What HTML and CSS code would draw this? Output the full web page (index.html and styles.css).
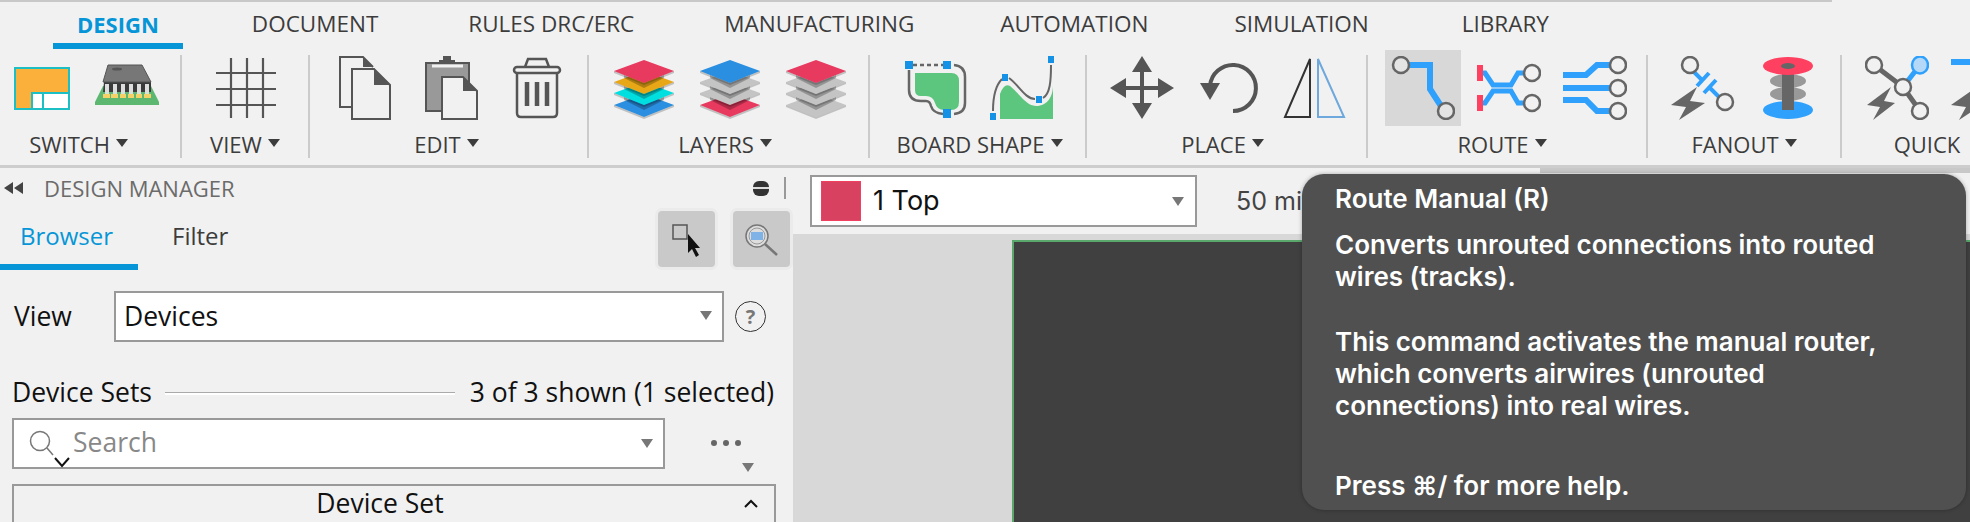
FILE: index.html
```html
<!DOCTYPE html>
<html lang="en">
<head>
    <meta charset="UTF-8">
    <meta name="viewport" content="width=device-width, initial-scale=1.0">
    <title>Design Manager</title>
    <link rel="stylesheet" href="styles.css">
</head>
<body>
    <div class="top-strip"></div>

    <div class="ribbon">
        <div class="tabs">
            <span class="tab active">DESIGN</span>
            <span class="tab">DOCUMENT</span>
            <span class="tab">RULES DRC/ERC</span>
            <span class="tab">MANUFACTURING</span>
            <span class="tab tab-auto">AUTOMATION</span>
            <span class="tab tab-sim">SIMULATION</span>
            <span class="tab tab-lib">LIBRARY</span>
        </div>

        <div class="groups">
            <div class="group g-switch">
                <div class="icons">
                    <svg viewBox="0 0 64 64">
                        <rect x="6" y="12" width="54" height="41" fill="#fbb03b" stroke="#1bbfc4" stroke-width="2"/>
                        <rect x="23" y="37" width="37" height="16" fill="#fff" stroke="#1bbfc4" stroke-width="2"/>
                        <path d="M34 37V53" stroke="#1bbfc4" stroke-width="2"/>
                    </svg>
                    <svg viewBox="0 0 64 64">
                        <polygon points="8,30 56,30 64,46 64,49 0,49 0,46" fill="#5cb870"/>
                        <polygon points="9,26 56,26 56,36 8,36" fill="#3a3a3a"/>
                        <polygon points="13,9 47,9 56,26 8,26" fill="#777" stroke="#555"/>
                        <path d="M12 28V38M20 28V38M28 28V38M36 28V38M44 28V38M52 28V38" stroke="#ddd" stroke-width="4"/>
                        <path d="M8 40H15M16 40H23M25 40H31M33 40H39M41 40H47M49 40H56" stroke="#f5d268" stroke-width="4"/>
                        <ellipse cx="22" cy="13" rx="5" ry="1.5" fill="#555"/>
                    </svg>
                </div>
                <div class="label">SWITCH<i class="caret"></i></div>
            </div>

            <div class="group g-view">
                <div class="icons">
                    <svg viewBox="0 0 64 64">
                        <path d="M17 2V62M33 2V62M49 2V62M2 17H62M2 33H62M2 49H62" stroke="#555" stroke-width="2.2" fill="none"/>
                    </svg>
                </div>
                <div class="label">VIEW<i class="caret"></i></div>
            </div>

            <div class="group g-edit">
                <div class="icons">
                    <svg viewBox="0 0 64 64">
                        <path d="M19 51H7V1H30L40 11" fill="none" stroke="#555" stroke-width="2"/>
                        <path d="M19 13H41L57 29V63H19Z" fill="#f1f1f1" stroke="#555" stroke-width="2"/>
                        <path d="M41 13L57 29H41Z" fill="#555"/>
                        <path d="M30 1L40 11H30Z" fill="#555"/>
                    </svg>
                    <svg viewBox="0 0 64 64">
                        <rect x="7" y="7" width="43" height="48" fill="#999" stroke="#555" stroke-width="2"/>
                        <path d="M13 10H44" stroke="#f1f1f1" stroke-width="3"/>
                        <path d="M20 7V4H24V0H32V4H36V7Z" fill="#555"/>
                        <path d="M23 21H44L58 35V63H23Z" fill="#f1f1f1" stroke="#555" stroke-width="2"/>
                        <path d="M44 21L58 35H44Z" fill="#555"/>
                    </svg>
                    <svg viewBox="0 0 64 64">
                        <path d="M12 17V57Q12 61 16 61H48Q52 61 52 57V17" fill="none" stroke="#555" stroke-width="2.5"/>
                        <rect x="9" y="11" width="46" height="6" rx="3" fill="none" stroke="#555" stroke-width="2.5"/>
                        <path d="M20 11L23 3H41L44 11" fill="none" stroke="#555" stroke-width="2.5"/>
                        <path d="M22 26V50M32 26V50M42 26V50" stroke="#555" stroke-width="4.5"/>
                    </svg>
                </div>
                <div class="label">EDIT<i class="caret"></i></div>
            </div>

            <div class="group g-layers">
                <div class="icons">
                    <svg viewBox="0 0 64 64">
                        <use href="#sheet-base" y="37" fill="#2a8fe0"/>
                        <use href="#sheet" y="25" fill="#00dfe0"/>
                        <use href="#sheet" y="14" fill="#e8a717"/>
                        <use href="#sheet" y="3" fill="#e8395f"/>
                    </svg>
                    <svg viewBox="0 0 64 64">
                        <use href="#sheet-base" y="37" fill="#e8395f"/>
                        <use href="#sheet" y="25" fill="#c4c4c4"/>
                        <use href="#sheet" y="14" fill="#c4c4c4"/>
                        <use href="#sheet" y="3" fill="#2a8fe0"/>
                    </svg>
                    <svg viewBox="0 0 64 64">
                        <use href="#sheet-base" y="37" fill="#c4c4c4"/>
                        <use href="#sheet" y="25" fill="#c4c4c4"/>
                        <use href="#sheet" y="14" fill="#c4c4c4"/>
                        <use href="#sheet" y="3" fill="#e8395f"/>
                    </svg>
                </div>
                <div class="label">LAYERS<i class="caret"></i></div>
            </div>

            <div class="group g-board">
                <div class="icons">
                    <svg viewBox="0 0 64 64">
                        <path d="M11 17H47Q55 17 55 25V46Q55 54 47 54H40Q33 54 31 47Q29 40 22 40H17Q11 40 11 34Z" fill="#5cc57e"/>
                        <path d="M5 14V34Q5 45 17 45H22Q26 45 27 50Q29 57 39 58M50 9Q61 10 61 21V47Q61 57 50 58" fill="none" stroke="#666" stroke-width="2.5"/>
                        <path d="M9 9H43" stroke="#666" stroke-width="2.5" stroke-dasharray="4 3" fill="none"/>
                        <path d="M1 5H9V13H1ZM39 5H47V13H39ZM39 53H47V62H39Z" fill="#1592e6"/>
                    </svg>
                    <svg viewBox="0 0 64 64">
                        <path d="M10 63V38Q14 27 20 30C30 38 36 50 46 50C58 50 63 40 63 29V63Z" fill="#5cc57e"/>
                        <path d="M3 55Q3 32 12 23M19 22C28 28 35 43 45 43M53 42C60 38 61 25 61 9" fill="none" stroke="#666" stroke-width="2"/>
                        <path d="M58 0H64V7H58ZM12 18H18V25H12ZM46 40H52V47H46ZM0 57H6V64H0Z" fill="#1592e6"/>
                    </svg>
                </div>
                <div class="label">BOARD SHAPE<i class="caret"></i></div>
            </div>

            <div class="group g-place">
                <div class="icons">
                    <svg viewBox="0 0 64 64">
                        <path d="M30 10H34V54H30ZM10 30H54V34H10Z" fill="#555"/>
                        <path d="M32 0L42 16H22ZM32 63L42 47H22ZM0 32L16 22V42ZM64 32L48 22V42Z" fill="#555"/>
                    </svg>
                    <svg viewBox="0 0 64 64">
                        <path d="M37 55A23 23 0 1 0 14 30" fill="none" stroke="#555" stroke-width="4"/>
                        <polygon points="4,27 24,27 14,44" fill="#555"/>
                    </svg>
                    <svg viewBox="0 0 64 64">
                        <polygon points="28,3 28,61 3,61" fill="none" stroke="#333" stroke-width="2"/>
                        <polygon points="36,3 36,61 62,61" fill="none" stroke="#6ea8dc" stroke-width="2"/>
                    </svg>
                </div>
                <div class="label">PLACE<i class="caret"></i></div>
            </div>

            <div class="group g-route">
                <div class="icons">
                    <svg class="hot" viewBox="0 0 64 64">
                        <path d="M18 9H39V33L50 50" fill="none" stroke="#2fa0fb" stroke-width="6"/>
                        <ellipse cx="10" cy="9" rx="8" ry="8" fill="#e4e4e4" stroke="#666" stroke-width="2.5"/>
                        <ellipse cx="55" cy="55" rx="8" ry="8" fill="#e4e4e4" stroke="#666" stroke-width="2.5"/>
                    </svg>
                    <svg viewBox="0 0 64 64">
                        <path d="M2 17H8L16 29H34L41 17H47M2 47H8L16 35H34L41 47H47" fill="none" stroke="#2fa0fb" stroke-width="5"/>
                        <path d="M0 9H6V25H0ZM0 39H6V55H0Z" fill="#ff4060"/>
                        <circle cx="55" cy="17" r="8" fill="#f1f1f1" stroke="#666" stroke-width="2.5"/>
                        <circle cx="55" cy="47" r="8" fill="#f1f1f1" stroke="#666" stroke-width="2.5"/>
                    </svg>
                    <svg viewBox="0 0 64 64">
                        <path d="M0 19H23L34 9H47M0 32H47M0 44H23L34 55H47" fill="none" stroke="#2fa0fb" stroke-width="6"/>
                        <circle cx="55" cy="9" r="8" fill="#f1f1f1" stroke="#666" stroke-width="2.5"/>
                        <circle cx="55" cy="32" r="8" fill="#f1f1f1" stroke="#666" stroke-width="2.5"/>
                        <circle cx="55" cy="55" r="8" fill="#f1f1f1" stroke="#666" stroke-width="2.5"/>
                    </svg>
                </div>
                <div class="label">ROUTE<i class="caret"></i></div>
            </div>

            <div class="group">
                <div class="icons">
                    <svg viewBox="0 0 64 64">
                        <path d="M23 16L32 25M38 31L48 41" stroke="#2fa0fb" stroke-width="4" fill="none"/>
                        <path d="M38 17L26 30M45 24L33 37" stroke="#2fa0fb" stroke-width="4" fill="none"/>
                        <circle cx="19" cy="9" r="8" fill="#f1f1f1" stroke="#666" stroke-width="2.5"/>
                        <circle cx="54" cy="46" r="8" fill="#f1f1f1" stroke="#666" stroke-width="2.5"/>
                        <polygon points="26,31 0,49 15,51 8,64 34,47 19,45" fill="#666"/>
                    </svg>
                    <svg viewBox="0 0 64 64">
                        <ellipse cx="31" cy="54" rx="25" ry="9" fill="#2fa0fb"/>
                        <ellipse cx="31" cy="38" rx="18" ry="7" fill="#999"/>
                        <ellipse cx="31" cy="25" rx="18" ry="7" fill="#999"/>
                        <rect x="25" y="10" width="12" height="44" fill="#666"/>
                        <ellipse cx="31" cy="10" rx="25" ry="9" fill="#ff4060"/>
                        <ellipse cx="31" cy="10" rx="7" ry="3" fill="#666"/>
                    </svg>
                </div>
                <div class="label">FANOUT<i class="caret"></i></div>
            </div>

            <div class="group g-quick">
                <div class="icons">
                    <svg viewBox="0 0 64 64">
                        <path d="M9 9L38 31L55 55" stroke="#666" stroke-width="5" fill="none"/>
                        <path d="M38 31L55 9" stroke="#2fa0fb" stroke-width="5" fill="none"/>
                        <circle cx="9" cy="9" r="8" fill="#f1f1f1" stroke="#666" stroke-width="2.5"/>
                        <ellipse cx="55" cy="9" rx="8" ry="8.5" fill="#b4d8f8" stroke="#2fa0fb" stroke-width="2.5"/>
                        <circle cx="38" cy="31" r="8" fill="#f1f1f1" stroke="#666" stroke-width="2.5"/>
                        <circle cx="55" cy="55" r="8" fill="#f1f1f1" stroke="#666" stroke-width="2.5"/>
                        <polygon points="26,31 2,49 15,51 8,64 30,47 19,45" fill="#666"/>
                    </svg>
                    <svg viewBox="0 0 64 64">
                        <path d="M0 6H24" stroke="#2fa0fb" stroke-width="6"/>
                        <polygon points="26,31 0,49 15,51 8,64 34,47 19,45" fill="#666"/>
                    </svg>
                </div>
                <div class="label">QUICK</div>
            </div>
        </div>
    </div>

    <div class="main">
        <div class="panel">
            <div class="dm-head">
                <svg class="dm-arrows" viewBox="0 0 20 12"><path d="M0 6L9 0V12ZM10 6L19 0V12Z" fill="#444"/></svg>
                <span class="dm-title">DESIGN MANAGER</span>
                <span class="dm-pill"></span>
                <span class="dm-bar"></span>
            </div>

            <div class="dm-tabs">
                <span class="dm-tab active">Browser</span>
                <span class="dm-tab">Filter</span>
                <span class="tool-btn">
                    <svg viewBox="0 0 56 56" width="56" height="56">
                        <rect x="15" y="14" width="14" height="14" fill="none" stroke="#555" stroke-width="1.5"/>
                        <path d="M30 23V42L34 38L38 46L41 44L37 37H42Z" fill="#111"/>
                    </svg>
                </span>
                <span class="tool-btn">
                    <svg viewBox="0 0 56 56" width="56" height="56">
                        <circle cx="24" cy="25" r="11" fill="#ddd" stroke="#777" stroke-width="1.5"/>
                        <circle cx="24" cy="25" r="8" fill="none" stroke="#999"/>
                        <rect x="18" y="21" width="12" height="8" fill="#7fb2e6"/>
                        <path d="M32 33L44 44" stroke="#777" stroke-width="2.5"/>
                    </svg>
                </span>
            </div>

            <div class="view-row">
                <span class="view-label">View</span>
                <div class="select view-select">Devices<i class="mini-caret"></i></div>
                <span class="help">?</span>
            </div>

            <div class="sets-row">
                <span>Device Sets</span>
                <span class="sets-line"></span>
                <span>3 of 3 shown (1 selected)</span>
            </div>

            <div class="search-row">
                <div class="select search">
                    <svg class="search-icon" viewBox="0 0 42 38" width="42" height="38">
                        <circle cx="11" cy="11" r="9.5" fill="none" stroke="#777" stroke-width="1.5"/>
                        <path d="M18 18L24 25" stroke="#777" stroke-width="1.5"/>
                        <path d="M26 28L33 36L40 28" fill="none" stroke="#111" stroke-width="2"/>
                    </svg>
                    <span class="placeholder">Search</span>
                    <i class="mini-caret"></i>
                </div>
                <div class="more">
                    <span class="dots"><b></b><b></b><b></b></span>
                    <i class="mini-caret"></i>
                </div>
            </div>

            <div class="table-head">
                <span>Device Set</span>
                <svg class="chev-up" viewBox="0 0 14 9" width="14" height="9"><path d="M1 8L7 2L13 8" fill="none" stroke="#111" stroke-width="2"/></svg>
            </div>
        </div>

        <div class="work">
            <div class="layerbar">
                <div class="select layer-select">
                    <span class="swatch"></span>
                    <span>1 Top</span>
                    <i class="mini-caret"></i>
                </div>
                <span class="grid-size">50 mil</span>
            </div>
            <div class="canvas">
                <div class="board"></div>
            </div>
        </div>
    </div>

    <div class="tooltip">
        <p class="tip-title">Route Manual (R)</p>
        <p class="tip-para">Converts unrouted connections into routed<br>wires (tracks).</p>
        <p class="tip-para">This command activates the manual router,<br>which converts airwires (unrouted<br>connections) into real wires.</p>
        <p class="tip-foot">Press ⌘/ for more help.</p>
    </div>

    <svg class="defs" width="0" height="0">
        <defs>
            <g id="sheet-base">
                <polygon points="2,12 32,1 62,12 32,24"/>
                <polygon points="2,12 32,24 62,12 62,14 32,26 2,14" fill="#000" opacity="0.2"/>
            </g>
            <g id="sheet">
                <polygon points="12,16 32,24 52,16 52,19 32,29 12,19" fill="#000" opacity="0.25"/>
                <polygon points="2,12 32,1 62,12 32,24"/>
                <polygon points="2,12 32,24 62,12 62,14 32,26 2,14" fill="#000" opacity="0.2"/>
            </g>
        </defs>
    </svg>
</body>
</html>
```

FILE: styles.css
```css
html, body {
    margin: 0;
    padding: 0;
}

body {
    position: relative;
    width: 1970px;
    height: 522px;
    overflow: hidden;
    font-family: "Open Sans", sans-serif;
    background-color: #f1f1f1;
    color: #111;
}

.top-strip {
    width: 1832px;
    height: 2px;
    background-color: #c8c8c8;
}

/* ribbon */
.ribbon {
    height: 163px;
    border-bottom: 3px solid #cdcdcd;
    overflow: hidden;
}

.tabs {
    display: flex;
    height: 47px;
    padding-left: 53px;
    gap: 42px;
}

.tab {
    padding: 7px 24px 0;
    font-size: 22.5px;
    line-height: 30px;
    color: #3c3c3c;
    white-space: nowrap;
}

.tab.active {
    margin-right: 3px;
    font-size: 22px;
    color: #0696d7;
    font-weight: 700;
    border-bottom: 6px solid #0696d7;
}

.tab-auto,
.tab-sim {
    margin-left: -4px;
}

.tab-lib {
    margin-left: 3px;
}

.groups {
    display: grid;
    grid-template-columns: 180px 128px 279px 281px 217px 281px 280px 194px 130px;
    height: 102px;
    margin-top: 6px;
}

.group {
    display: flex;
    flex-direction: column;
    border-left: 2px solid #cbcbcb;
    box-sizing: border-box;
}

.group:first-child {
    border-left: none;
}

.icons {
    display: flex;
    gap: 22px;
    height: 64px;
    padding: 1px 0 0 23px;
}

.icons svg {
    flex: none;
    width: 64px;
    height: 64px;
}

.icons .hot {
    background-color: #d8d8d8;
    box-shadow: 0 0 0 6px #d8d8d8;
}

.g-switch .icons {
    padding-left: 9px;
}

.g-view .icons {
    padding-left: 32px;
}

.g-board .icons {
    padding-left: 34px;
}

.label {
    display: flex;
    justify-content: center;
    align-items: center;
    gap: 6px;
    margin-top: 10px;
    font-size: 22px;
    line-height: 28px;
    color: #3c3c3c;
    white-space: nowrap;
}

.g-switch .label {
    padding-right: 23px;
}

.g-edit .label {
    padding-right: 4px;
}

.g-layers .label {
    padding-right: 7px;
}

.g-board .label {
    padding-left: 4px;
}

.g-place .label {
    padding-right: 8px;
}

.g-route .label {
    padding-right: 10px;
}

.g-quick .label {
    padding-left: 42px;
}

.caret {
    width: 0;
    height: 0;
    margin-top: -2px;
    border-left: 6px solid transparent;
    border-right: 6px solid transparent;
    border-top: 8px solid #3c3c3c;
}

.defs {
    position: absolute;
}

/* main area */
.main {
    display: flex;
    height: 354px;
}

.panel {
    flex: none;
    width: 793px;
    overflow: hidden;
}

.dm-head {
    display: flex;
    align-items: center;
    height: 40px;
    padding-left: 4px;
}

.dm-arrows {
    width: 20px;
    height: 12px;
}

.dm-title {
    margin-left: 20px;
    font-size: 22px;
    color: #6b6b6b;
}

.dm-pill {
    width: 16px;
    height: 15px;
    margin-left: auto;
    border-radius: 6px;
    background: linear-gradient(#333 6px, #ddd 6px, #ddd 8px, #333 8px);
}

.dm-bar {
    width: 2px;
    height: 22px;
    margin: 0 7px 0 15px;
    background-color: #999;
}

.dm-tabs {
    display: flex;
    align-items: flex-start;
    height: 62px;
}

.dm-tab {
    height: 44px;
    margin-left: 34px;
    padding-top: 12px;
    font-size: 24px;
    line-height: 32px;
    color: #3c3c3c;
}

.dm-tab.active {
    width: 118px;
    margin-left: 0;
    padding-left: 20px;
    color: #0696d7;
    border-bottom: 6px solid #0696d7;
}

.tool-btn {
    width: 57px;
    height: 56px;
    margin-left: 18px;
    margin-top: 3px;
    border-radius: 4px;
    background-color: #c9c9c9;
    box-shadow: 0 0 0 3px #ebebeb;
}

.dm-tab + .tool-btn {
    margin-left: auto;
}

.tool-btn:last-child {
    margin-right: 3px;
}

.select {
    position: relative;
    display: flex;
    align-items: center;
    height: 51px;
    box-sizing: border-box;
    border: 2px solid #999;
    background-color: #fff;
}

.mini-caret {
    width: 0;
    height: 0;
    border-left: 6px solid transparent;
    border-right: 6px solid transparent;
    border-top: 9px solid #777;
}

.select .mini-caret {
    margin-left: auto;
}

.view-row {
    display: flex;
    align-items: center;
    margin-top: 21px;
    padding-left: 14px;
    font-size: 26.5px;
}

.view-label {
    width: 100px;
    margin-bottom: 2px;
}

.view-select {
    width: 610px;
    padding: 0 10px 2px 8px;
}

.help {
    width: 31px;
    height: 31px;
    margin-left: 11px;
    border: 1px solid #333;
    border-radius: 50%;
    box-sizing: border-box;
    font-size: 20px;
    font-weight: 700;
    line-height: 29px;
    text-align: center;
    color: #777;
}

.sets-row {
    display: flex;
    align-items: center;
    height: 38px;
    margin-top: 31px;
    padding: 0 19px 0 12px;
    font-size: 26.5px;
    line-height: 38px;
    white-space: nowrap;
}

.sets-line {
    flex: 1;
    height: 1px;
    margin: 2px 15px 0 13px;
    background-color: #aaa;
    border-bottom: 2px solid #fff;
}

.search-row {
    display: flex;
    height: 51px;
    margin-top: 7px;
    padding-left: 12px;
}

.search {
    width: 653px;
    padding: 0 10px 0 15px;
}

.search-icon {
    flex: none;
    margin-top: 10px;
}

.placeholder {
    margin: 0 0 3px 2px;
    font-size: 26.5px;
    color: #888;
}

.more {
    display: flex;
    flex-direction: column;
    align-items: flex-end;
    width: 89px;
    height: 51px;
    padding-top: 22px;
    box-sizing: border-box;
}

.dots {
    display: flex;
    gap: 6px;
    margin-right: 13px;
}

.dots b {
    width: 6px;
    height: 6px;
    border-radius: 50%;
    background-color: #666;
}

.more .mini-caret {
    margin-top: 17px;
}

.table-head {
    display: flex;
    justify-content: center;
    align-items: center;
    position: relative;
    width: 764px;
    height: 38px;
    margin: 15px 0 0 12px;
    padding: 0 28px 2px 0;
    box-sizing: border-box;
    border: 2px solid #999;
    border-bottom: none;
    font-size: 26.5px;
}

.chev-up {
    position: absolute;
    right: 16px;
    top: 13px;
}

.work {
    flex: 1;
    display: flex;
    flex-direction: column;
}

.layerbar {
    display: flex;
    align-items: center;
    height: 66px;
    padding-left: 17px;
    box-sizing: border-box;
    background: linear-gradient(#c8c8c8, #c8c8c8) no-repeat right top / 430px 5px;
}

.layer-select {
    width: 387px;
    height: 52px;
    padding: 0 11px 0 9px;
    font-family: Inter, sans-serif;
    font-size: 27px;
    line-height: 32px;
    color: #111;
}

.swatch {
    width: 40px;
    height: 40px;
    margin-right: 12px;
    box-sizing: border-box;
    border: 1px solid #f04060;
    background-color: #d8415f;
}

.grid-size {
    margin-left: 39px;
    font-family: Inter, sans-serif;
    font-size: 25px;
    color: #444;
    white-space: nowrap;
}

.canvas {
    flex: 1;
    padding: 6px 0 0 219px;
    background-color: #d8d8d8;
}

.board {
    height: 100%;
    box-sizing: border-box;
    border-top: 2px solid #5aa86c;
    border-left: 2px solid #5aa86c;
    background-color: #404040;
}

/* tooltip over the canvas */
.tooltip {
    position: absolute;
    left: 1302px;
    top: 174px;
    width: 664px;
    height: 336px;
    padding: 9px 33px 0;
    box-sizing: border-box;
    border-radius: 22px;
    background-color: #505050;
    box-shadow: 0 0 4px rgba(0,0,0,0.3);
    font-family: Inter, sans-serif;
    font-size: 26px;
    font-weight: 600;
    line-height: 32px;
    color: #fff;
}

.tooltip p {
    margin: 0;
}

.tip-title {
    margin-bottom: 14px !important;
}

.tip-para {
    margin-bottom: 33px !important;
}

.tip-foot {
    margin-top: 48px !important;
}
```
